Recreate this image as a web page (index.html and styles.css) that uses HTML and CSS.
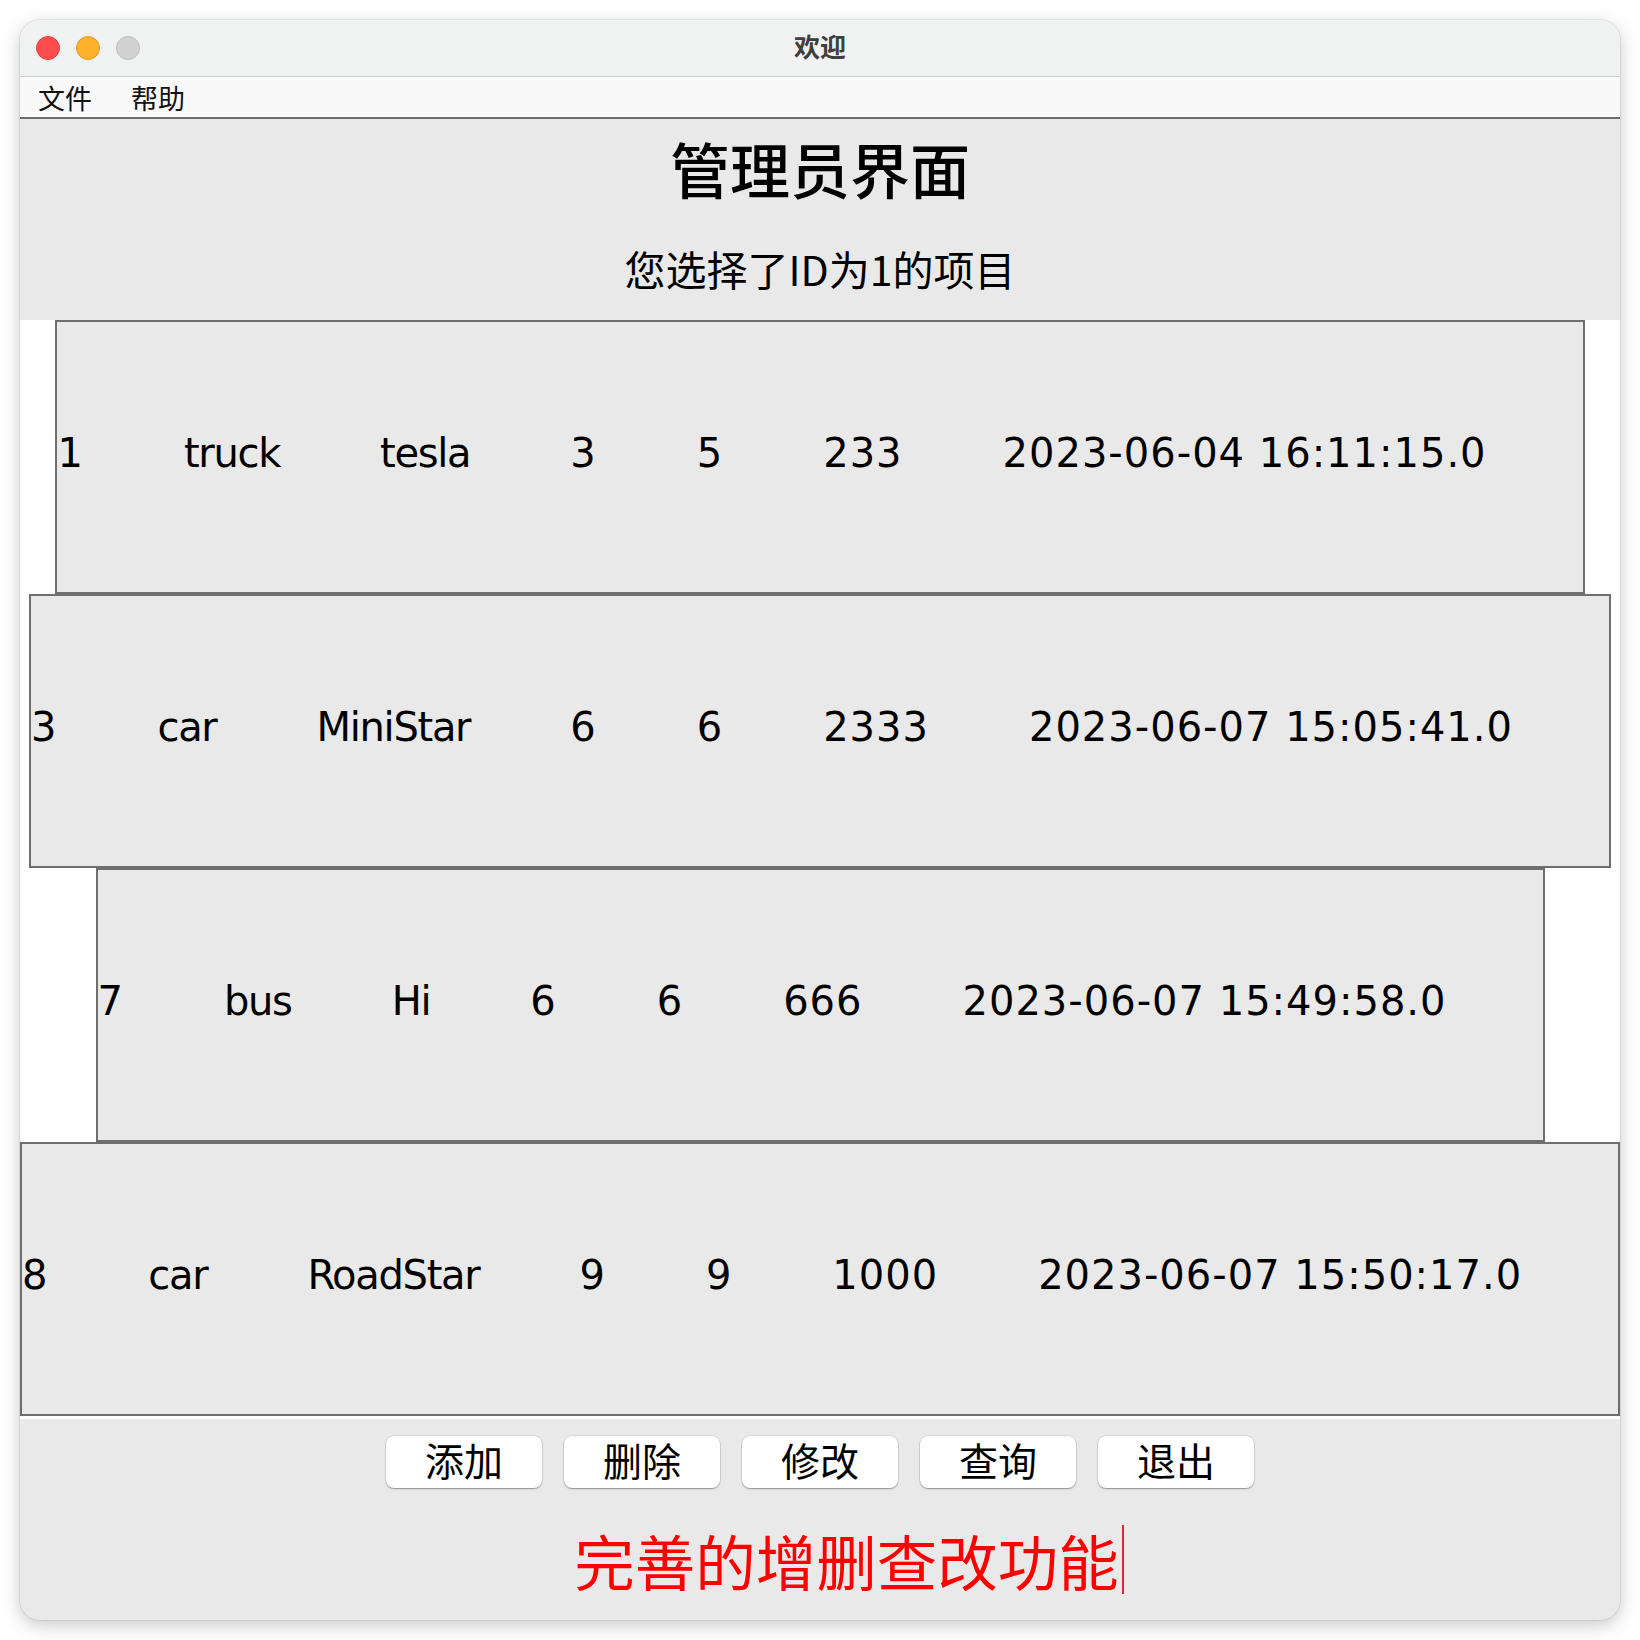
FILE: index.html
```html
<!DOCTYPE html>
<html lang="zh-CN">
<head>
<meta charset="utf-8">
<title>欢迎</title>
<link rel="stylesheet" href="styles.css">
</head>
<body>
<div class="window">
  <div class="titlebar">
    <div class="lights">
      <span class="light red"></span>
      <span class="light yellow"></span>
      <span class="light gray"></span>
    </div>
    <div class="title">欢迎</div>
    <div class="title-spacer"></div>
  </div>
  <div class="menubar">
    <span class="menu-item">文件</span>
    <span class="menu-item">帮助</span>
  </div>
  <div class="header">
    <h1 class="heading">管理员界面</h1>
    <p class="subtitle">您选择了ID为1的项目</p>
  </div>
  <div class="rows">
    <div class="row">
      <span class="cell num">1</span>
      <span class="cell word">truck</span>
      <span class="cell word">tesla</span>
      <span class="cell num">3</span>
      <span class="cell num">5</span>
      <span class="cell num">233</span>
      <span class="cell num">2023-06-04 16:11:15.0</span>
    </div>
    <div class="row">
      <span class="cell num">3</span>
      <span class="cell word">car</span>
      <span class="cell word">MiniStar</span>
      <span class="cell num">6</span>
      <span class="cell num">6</span>
      <span class="cell num">2333</span>
      <span class="cell num">2023-06-07 15:05:41.0</span>
    </div>
    <div class="row">
      <span class="cell num">7</span>
      <span class="cell word">bus</span>
      <span class="cell word">Hi</span>
      <span class="cell num">6</span>
      <span class="cell num">6</span>
      <span class="cell num">666</span>
      <span class="cell num">2023-06-07 15:49:58.0</span>
    </div>
    <div class="row">
      <span class="cell num">8</span>
      <span class="cell word">car</span>
      <span class="cell word">RoadStar</span>
      <span class="cell num">9</span>
      <span class="cell num">9</span>
      <span class="cell num">1000</span>
      <span class="cell num">2023-06-07 15:50:17.0</span>
    </div>
  </div>
  <div class="footer">
    <div class="buttons">
      <button class="btn">添加</button>
      <button class="btn">删除</button>
      <button class="btn">修改</button>
      <button class="btn">查询</button>
      <button class="btn">退出</button>
    </div>
    <div class="textfield">
      <span class="field-text">完善的增删查改功能</span><span class="caret"></span>
    </div>
  </div>
</div>
</body>
</html>
```
FILE: styles.css
```css
* {
  box-sizing: border-box;
}

html, body {
  margin: 0;
  padding: 0;
  background: #ffffff;
}

body {
  padding: 20px;
  font-family: "Noto Sans CJK SC", "DejaVu Sans", sans-serif;
}

.window {
  width: 1600px;
  height: 1600px;
  border-radius: 20px;
  overflow: hidden;
  background: #e9e9e9;
  box-shadow: 0 5px 18px rgba(0, 0, 0, 0.22), 0 0 0 1px rgba(0, 0, 0, 0.07);
  display: flex;
  flex-direction: column;
}

/* Title bar */
.titlebar {
  height: 57px;
  background: #f0f1f1;
  border-bottom: 1px solid #cfcfcf;
  display: grid;
  grid-template-columns: 1fr auto 1fr;
  align-items: center;
}

.lights {
  display: flex;
  gap: 16px;
  padding-left: 16px;
  padding-bottom: 1px;
}

.light {
  width: 24px;
  height: 24px;
  border-radius: 50%;
  display: block;
}

.light.red {
  background: #fe4c4e;
  border: 1px solid #e2413f;
}

.light.yellow {
  background: #feb12a;
  border: 1px solid #e19d24;
}

.light.gray {
  background: #d2d2d2;
  border: 1px solid #bcbcbc;
}

.title {
  font-size: 26px;
  font-weight: 700;
  color: #3e3e3e;
  line-height: 1;
  padding-bottom: 4px;
}

/* Menu bar */
.menubar {
  height: 42px;
  background: #f9f9f9;
  border-bottom: 2px solid #6e6e6e;
  display: flex;
  align-items: center;
  gap: 39px;
  padding-left: 18px;
}

.menu-item {
  font-size: 27px;
  line-height: 1;
  color: #111111;
}

/* Header */
.header {
  height: 201px;
  display: flex;
  flex-direction: column;
  align-items: center;
  padding-top: 19px;
}

.heading {
  margin: 0;
  font-size: 60px;
  line-height: 60px;
  font-weight: 500;
  color: #000000;
}

.subtitle {
  margin: 50px 0 0 0;
  font-size: 41px;
  line-height: 41px;
  color: #000000;
}

/* Data rows */
.rows {
  background: #ffffff;
  display: flex;
  flex-direction: column;
  align-items: center;
  padding-bottom: 3px;
}

.row {
  width: max-content;
  height: 274px;
  border: 2px solid #6e6e6e;
  background: #e9e9e9;
  display: flex;
  align-items: center;
  gap: 100px;
  padding: 0 96px 9px 0;
  font-family: "DejaVu Sans", "Noto Sans CJK SC", sans-serif;
  font-size: 40px;
  color: #000000;
}

.cell {
  white-space: nowrap;
}

.cell.num {
  letter-spacing: 1px;
}

.cell.word {
  letter-spacing: -1.3px;
}

/* Footer */
.footer {
  flex: 1;
  display: flex;
  flex-direction: column;
  align-items: center;
  padding-top: 17px;
}

.buttons {
  display: flex;
  gap: 22px;
}

.btn {
  width: 156px;
  height: 52px;
  border: none;
  border-radius: 8px;
  background: #ffffff;
  box-shadow: 0 1px 1.5px rgba(0, 0, 0, 0.35), 0 0 0 0.5px rgba(0, 0, 0, 0.12);
  font-family: "Noto Sans CJK SC", sans-serif;
  font-size: 39px;
  line-height: 1;
  color: #000000;
  padding: 0 0 5px 0;
  display: flex;
  align-items: center;
  justify-content: center;
}

.textfield {
  margin-top: 37px;
  margin-left: 58px;
  height: 69px;
  display: flex;
  align-items: center;
}

.field-text {
  font-size: 60.5px;
  line-height: 60px;
  color: #ff0000;
}

.caret {
  width: 2px;
  height: 69px;
  margin-left: 3px;
  background: #e0262e;
}
```
